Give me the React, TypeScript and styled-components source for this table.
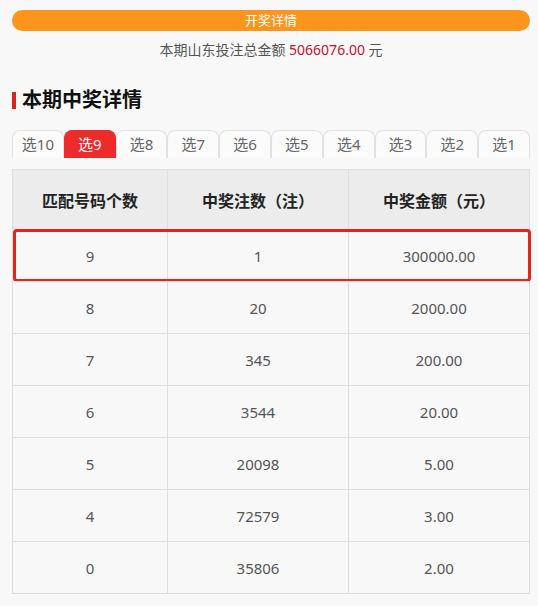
import React from "react";
import styled, { createGlobalStyle } from "styled-components";

const Global = createGlobalStyle`
  html, body { margin: 0; padding: 0; background: #f8f8f8; }
  body { font-family: "Noto Sans", "Noto Sans CJK SC", sans-serif; }
`;

const Page = styled.div`
  width: 518px;
  padding: 10px 8px 0 12px;
  display: flex;
  flex-direction: column;
`;

const Banner = styled.div`
  height: 21px;
  border-radius: 11px;
  background: #fb951b;
  color: #fff;
  font-size: 13px;
  line-height: 21px;
  text-align: center;
`;

const Summary = styled.div`
  margin-top: 9px;
  height: 20px;
  line-height: 20px;
  font-size: 14px;
  color: #555;
  text-align: center;
`;

const Amount = styled.span`
  color: #c8102e;
`;

const Heading = styled.h2`
  margin: 28px 0 0;
  height: 24px;
  display: flex;
  align-items: center;
  gap: 6px;
  font-size: 20px;
  font-weight: 700;
  color: #111;
  line-height: 24px;
`;

const Mark = styled.span`
  width: 4px;
  height: 17px;
  background: #d8261f;
`;

const Tabs = styled.div`
  margin-top: 18px;
  display: grid;
  grid-template-columns: repeat(10, 1fr);
  height: 28px;
`;

const Tab = styled.div<{ $active?: boolean }>`
  border: 1px solid ${(p) => (p.$active ? "#ec2b2b" : "#e2e2e2")};
  border-bottom: none;
  border-radius: 8px 8px 0 0;
  background: ${(p) => (p.$active ? "#ec2b2b" : "#fbfbfb")};
  color: ${(p) => (p.$active ? "#fff" : "#666")};
  font-size: 15px;
  line-height: 27px;
  text-align: center;
  box-sizing: border-box;
`;

const Table = styled.div`
  margin-top: 11px;
  border: 1px solid #dedede;
  display: flex;
  flex-direction: column;
`;

const Row = styled.div<{ $head?: boolean; $hit?: boolean }>`
  position: relative;
  display: grid;
  grid-template-columns: 154px 181px 1fr;
  height: ${(p) => (p.$head ? 59 : 52)}px;
  background: ${(p) => (p.$head ? "#ececec" : "#f8f8f8")};
  border-top: ${(p) => (p.$head ? "none" : "1px solid #dedede")};
  box-sizing: border-box;
  ${(p) =>
    p.$hit &&
    `&::after {
      content: "";
      position: absolute;
      inset: -1px -2px -1px 0;
      border: 3px solid #e5241f;
      border-radius: 4px;
      pointer-events: none;
    }`}
`;

const Cell = styled.div<{ $head?: boolean }>`
  display: flex;
  align-items: center;
  justify-content: center;
  border-left: 1px solid #dedede;
  font-size: ${(p) => (p.$head ? 16 : 15)}px;
  font-weight: ${(p) => (p.$head ? 700 : 400)};
  color: ${(p) => (p.$head ? "#222" : "#555")};
  &:first-child { border-left: none; }
`;

const tabs = ["选10", "选9", "选8", "选7", "选6", "选5", "选4", "选3", "选2", "选1"];
const rows = [
  ["9", "1", "300000.00"],
  ["8", "20", "2000.00"],
  ["7", "345", "200.00"],
  ["6", "3544", "20.00"],
  ["5", "20098", "5.00"],
  ["4", "72579", "3.00"],
  ["0", "35806", "2.00"],
];

export default function App() {
  return (
    <>
      <Global />
      <Page>
        <Banner>开奖详情</Banner>
        <Summary>
          本期山东投注总金额 <Amount>5066076.00</Amount> 元
        </Summary>
        <Heading>
          <Mark />
          本期中奖详情
        </Heading>
        <Tabs>
          {tabs.map((t) => (
            <Tab key={t} $active={t === "选9"}>
              {t}
            </Tab>
          ))}
        </Tabs>
        <Table>
          <Row $head>
            <Cell $head>匹配号码个数</Cell>
            <Cell $head>中奖注数（注）</Cell>
            <Cell $head>中奖金额（元）</Cell>
          </Row>
          {rows.map((r, i) => (
            <Row key={i} $hit={i === 0}>
              {r.map((c, j) => (
                <Cell key={j}>{c}</Cell>
              ))}
            </Row>
          ))}
        </Table>
      </Page>
    </>
  );
}
